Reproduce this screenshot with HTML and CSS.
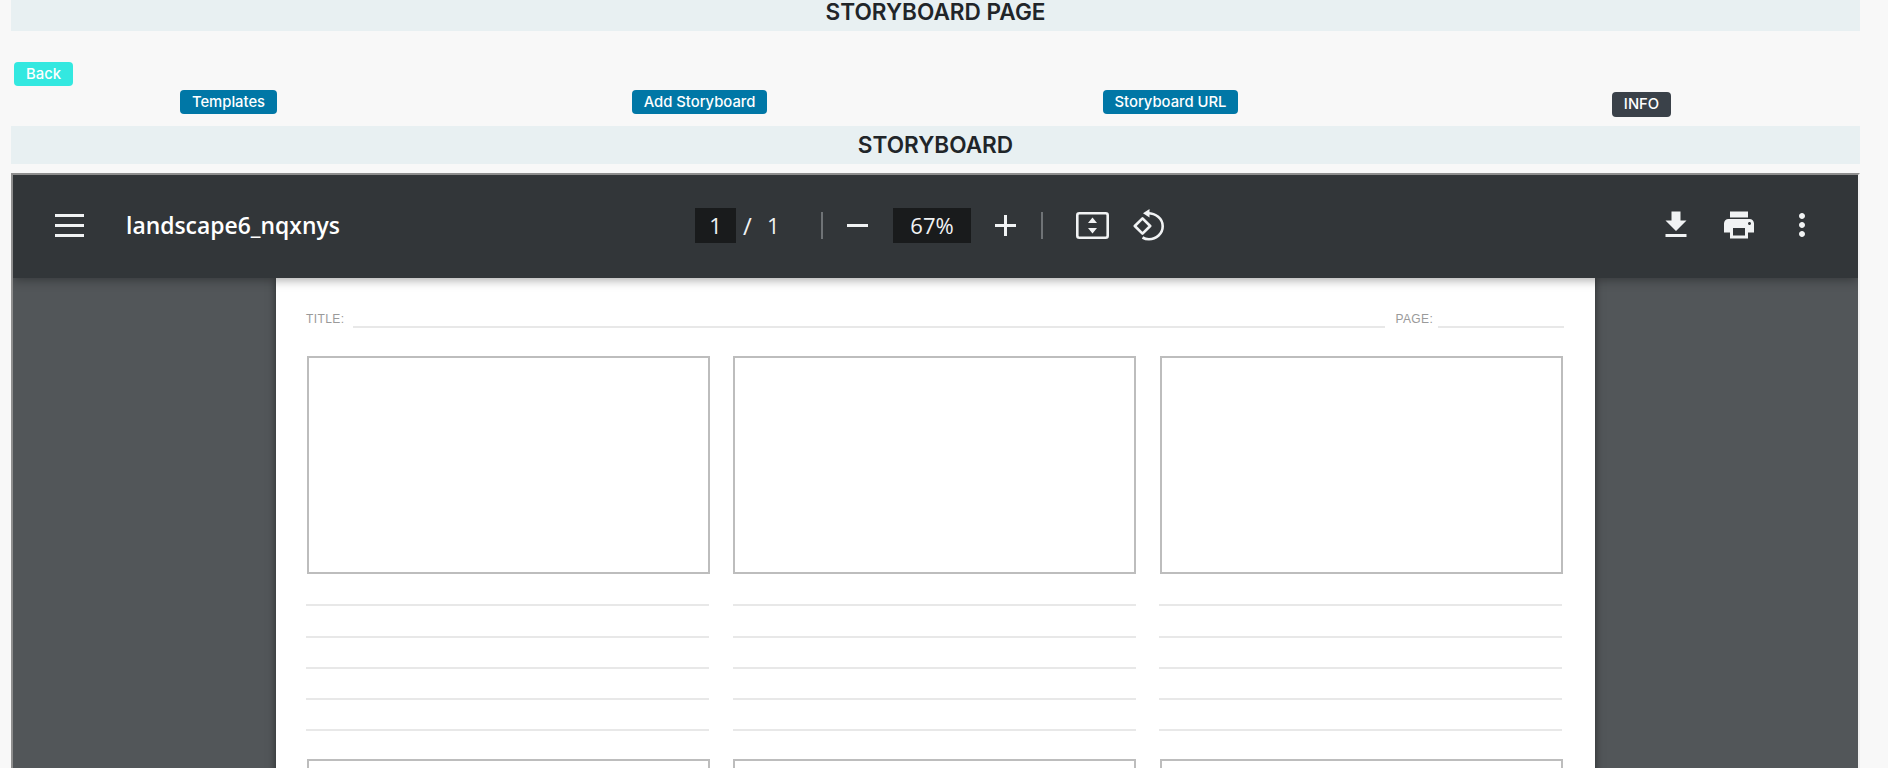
FILE: index.html
```html
<!DOCTYPE html>
<html lang="en">
<head>
<meta charset="utf-8">
<title>Storyboard Page</title>
<link rel="stylesheet" href="styles.css">
</head>
<body>
<main class="wrap">
  <h1 class="band band-top">STORYBOARD PAGE</h1>
  <div class="back-row"><a class="btn btn-back">Back</a></div>
  <div class="actions">
    <div class="cell"><a class="btn btn-blue">Templates</a></div>
    <div class="cell"><a class="btn btn-blue">Add Storyboard</a></div>
    <div class="cell"><a class="btn btn-blue">Storyboard URL</a></div>
    <div class="cell"><a class="btn btn-dark">INFO</a></div>
  </div>
  <h2 class="band band-second">STORYBOARD</h2>
  <section class="viewer">
    <header class="toolbar">
      <div class="tb-left">
        <span class="hamburger"><i></i><i></i><i></i></span>
        <span class="doc-title">landscape6_nqxnys</span>
      </div>
      <div class="tb-center">
        <span class="field field-page">1</span>
        <span class="slash">/</span>
        <span class="total">1</span>
        <span class="sep sep-a"></span>
        <svg class="ico-zoom ico-minus" viewBox="0 0 21 21"><rect y="9" width="21" height="3" fill="#f1f3f4"/></svg>
        <span class="field field-zoom">67%</span>
        <svg class="ico-zoom ico-plus" viewBox="0 0 21 21"><path d="M0 9h21v3H0zM9 0h3v21H9z" fill="#f1f3f4"/></svg>
        <span class="sep sep-b"></span>
        <svg class="ico-fit" viewBox="0 0 33 27"><rect x="1.300" y="1.300" width="30.400" height="24.400" rx="2" fill="none" stroke="#f1f3f4" stroke-width="2.600"/><path d="M16.500 5.500l4.500 5.500h-9zM16.500 21.500l-4.500-5.500h9z" fill="#f1f3f4"/></svg>
        <svg class="ico-rotate" viewBox="0 0 32 32"><path d="M1.800 17l7.700-7.700 7.700 7.700-7.700 7.700z" fill="none" stroke="#f1f3f4" stroke-width="2.600" stroke-linejoin="round"/><path d="M15 4.200c7.500 0 14.700 5 14.700 13 0 7.300-6.400 13-13.700 13-2.500 0-4.600-.6-6.500-1.700" fill="none" stroke="#f1f3f4" stroke-width="2.600"/><path d="M16.500 0v8.500L10 4.200z" fill="#f1f3f4"/></svg>
      </div>
      <div class="tb-right">
        <svg class="ico" viewBox="0 0 24 24"><path d="M19 9h-4V3H9v6H5l7 7 7-7zM5 18v2h14v-2H5z" fill="#f1f3f4"/></svg>
        <svg class="ico" viewBox="0 0 24 24"><path d="M19 8H5c-1.660 0-3 1.340-3 3v6h4v4h12v-4h4v-6c0-1.660-1.340-3-3-3zm-3 11H8v-5h8v5zm3-7c-.55 0-1-.45-1-1s.45-1 1-1 1 .45 1 1-.45 1-1 1zm-1-9H6v4h12V3z" fill="#f1f3f4"/></svg>
        <svg class="ico" viewBox="0 0 24 24"><path d="M12 8c1.100 0 2-.9 2-2s-.9-2-2-2-2 .9-2 2 .9 2 2 2zm0 2c-1.100 0-2 .9-2 2s.9 2 2 2 2-.9 2-2-.9-2-2-2zm0 6c-1.100 0-2 .9-2 2s.9 2 2 2 2-.9 2-2-.9-2-2-2z" fill="#f1f3f4"/></svg>
      </div>
    </header>
    <div class="canvas">
      <article class="sheet">
        <div class="sheet-head">
          <span class="label">TITLE:</span><span class="rule rule-title"></span>
          <span class="label label-page">PAGE:</span><span class="rule rule-page"></span>
        </div>
        <div class="grid">
          <div class="panel"><div class="frame"></div><div class="lines"><i></i><i></i><i></i><i></i><i></i></div></div>
          <div class="panel"><div class="frame"></div><div class="lines"><i></i><i></i><i></i><i></i><i></i></div></div>
          <div class="panel"><div class="frame"></div><div class="lines"><i></i><i></i><i></i><i></i><i></i></div></div>
          <div class="panel"><div class="frame"></div></div>
          <div class="panel"><div class="frame"></div></div>
          <div class="panel"><div class="frame"></div></div>
        </div>
      </article>
    </div>
  </section>
</main>
</body>
</html>
```
FILE: styles.css
```css
* { box-sizing: border-box; }
html, body { margin: 0; height: 768px; overflow: hidden; background: #f8f8f8; }
body { font-family: Inter, "Liberation Sans", sans-serif; color: #212529; }
.wrap { padding: 0 28px 0 11px; }

.band {
  margin: 0;
  background: #e8f0f2;
  text-align: center;
  font-size: 22.6px;
  font-weight: 600;
}
.band-top { height: 31px; line-height: 24px; }
.band-second { height: 38px; line-height: 38px; }

.back-row { padding: 31px 0 0 3px; }
.btn {
  display: inline-block;
  height: 24px;
  padding: 0 12px;
  border-radius: 4px;
  font-size: 14.800px;
  font-weight: 500;
  line-height: 24px;
  color: #fff;
}
.btn-back { display: block; width: 59px; padding: 0; text-align: center; background: #33e8e0; }
.btn-blue { background: #0077a6; }
.btn-dark { height: 25px; line-height: 25px; margin-top: 2px; padding: 0 12px; background: #3a4149; }

.actions {
  display: grid;
  grid-template-columns: repeat(4, 471px);
  margin: 4px 0 0 -18px;
  height: 36px;
}
.cell { display: flex; justify-content: center; align-items: flex-start; }

.viewer {
  margin-top: 9px;
  height: 620px;
  overflow: hidden;
  border-style: solid;
  border-width: 2px;
  border-color: #8e8e8e #f0f0f0 #f0f0f0 #8e8e8e;
  background: #525659;
}
.toolbar {
  position: relative;
  z-index: 2;
  display: flex;
  align-items: center;
  height: 103px;
  padding-bottom: 3px;
  background: #323639;
  color: #f1f3f4;
  box-shadow: 0 2px 10px rgba(0,0,0,.35);
  font-family: "Open Sans", "Noto Sans", sans-serif;
}
.tb-left { display: flex; align-items: center; width: 682px; padding-left: 42px; }
.hamburger { display: flex; flex-direction: column; gap: 7px; width: 29px; }
.hamburger i { display: block; height: 3px; background: #f1f3f4; }
.doc-title { margin-left: 42px; font-size: 22.900px; font-weight: 600; color: #fff; }

.tb-center { display: flex; align-items: center; }
.field {
  height: 35px;
  background: #191b1c;
  text-align: center;
  font-size: 22px;
  line-height: 35px;
}
.field-page { width: 41px; }
.field-zoom { width: 78px; }
.slash { margin-left: 7px; width: 11px; font-size: 24px; }
.total { margin-left: 13px; width: 11px; font-size: 22px; }
.sep { width: 2px; height: 27px; background: #6f7376; }
.sep-a { margin-left: 43px; }
.sep-b { margin-left: 25px; }
.ico-zoom { width: 21px; height: 21px; }
.ico-minus { margin: 0 25px 0 24px; }
.ico-plus { margin-left: 24px; }
.ico-fit { width: 33px; height: 27px; margin-left: 33px; }
.ico-rotate { width: 32px; height: 32px; margin-left: 24px; margin-top: -1px; }

.tb-right { display: flex; align-items: center; gap: 27px; margin-left: auto; padding-right: 38px; }
.ico { width: 36px; height: 36px; display: block; }

.canvas { display: flex; justify-content: center; height: 520px; }
.sheet {
  width: 1319px;
  flex: none;
  padding: 0 30px;
  background: #fff;
  box-shadow: 0 0 8px rgba(0,0,0,.5);
}
.sheet-head { display: flex; align-items: flex-end; height: 50px; }
.label { font-family: "Liberation Sans", Arial, sans-serif; font-size: 12px; line-height: 15px; letter-spacing: .4px; color: #9a9a9a; margin-bottom: 1px; }
.label-page { margin-left: 10px; }
.rule { height: 2px; background: #e8e8e8; }
.rule-title { width: 1032px; margin-left: 9px; }
.rule-page { width: 126px; margin-left: 5px; }

.grid { display: grid; grid-template-columns: repeat(3, 403px); column-gap: 23.500px; margin-top: 28px; }
.frame { height: 218px; margin: 0 -.5px 0 .5px; border: 2px solid #bdbdbd; }
.lines { padding-top: 1px; height: 185px; }
.lines i { display: block; height: 2px; margin-top: 29.250px; background: #e8e8e8; }
```
